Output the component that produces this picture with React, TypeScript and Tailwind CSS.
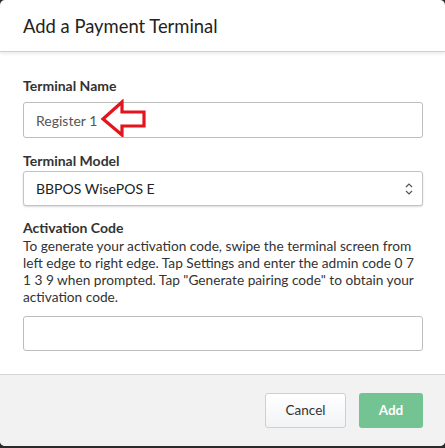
import React, { useState } from "react";

const RedArrow = () => (
  <svg width="46" height="38" viewBox="0 0 46 38" className="absolute left-[100px] top-[99px]">
    <path
      d="M3 20 L22 3 L22 13 L44 13 L44 27 L22 27 L22 36 Z"
      fill="none"
      stroke="#e3141d"
      strokeWidth="3.2"
      strokeLinejoin="miter"
    />
  </svg>
);

const App: React.FC = () => {
  const [name, setName] = useState("Register 1");
  const [model, setModel] = useState("BBPOS WisePOS E");
  const [code, setCode] = useState("");

  return (
    <div
      className="h-[448px] w-[445px] bg-[#2a2a2a] text-[#333]"
      style={{ fontFamily: "Lato, 'Open Sans', sans-serif" }}
    >
      <div className="relative flex h-[446px] flex-col overflow-hidden rounded-[5px] bg-white">
        <div className="flex h-[52px] items-center border-b border-[#d0d0d0] px-[23px] pt-[2px] shadow-[0_2px_3px_rgba(0,0,0,0.08)]">
          <h2 className="text-[18.4px] text-[#222]">Add a Payment Terminal</h2>
        </div>

        <div className="flex flex-1 flex-col px-[23px] pt-[25px]">
          <label className="text-[14px] font-bold leading-[18px] text-[#333]">Terminal Name</label>
          <input
            value={name}
            onChange={(e) => setName(e.target.value)}
            className="mt-[7px] h-[36px] w-[400px] rounded-[3px] border border-[#bdbdbd] px-[12px] text-[14px] text-[#555] outline-none"
          />

          <label className="mt-[14px] text-[14px] font-bold leading-[18px] text-[#333]">Terminal Model</label>
          <div className="relative mt-[1px] h-[35px] w-[400px]">
            <select
              value={model}
              onChange={(e) => setModel(e.target.value)}
              className="h-full w-full appearance-none rounded-[3px] border border-[#c4c4c4] bg-white px-[12px] text-[14px] text-[#222] shadow-[0_1px_2px_rgba(0,0,0,0.15)] outline-none"
            >
              <option>BBPOS WisePOS E</option>
              <option>Verifone P400</option>
            </select>
            <svg width="8" height="12" viewBox="0 0 8 12" className="pointer-events-none absolute right-[10px] top-[12px]">
              <path d="M1 4 L4 1 L7 4 M1 8 L4 11 L7 8" fill="none" stroke="#555" strokeWidth="1.2" />
            </svg>
          </div>

          <label className="mt-[13px] text-[14px] font-bold leading-[18px] text-[#333]">Activation Code</label>
          <p className="text-[13.7px] leading-[17px] text-[#333]">
            To generate your activation code, swipe the terminal screen from left edge to right edge. Tap Settings and
            enter the admin code 0 7 1 3 9 when prompted. Tap "Generate pairing code" to obtain your activation code.
          </p>
          <input
            value={code}
            onChange={(e) => setCode(e.target.value)}
            className="mt-[11px] h-[35px] w-[400px] rounded-[3px] border border-[#bdbdbd] px-[12px] text-[13px] outline-none"
          />
        </div>

        <div className="flex h-[72px] items-center justify-end gap-[13px] border-t border-[#d4d4d4] bg-[#f2f2f2] px-[22px]">
          <button className="h-[35px] w-[81px] rounded-[3px] border border-[#cfcfcf] bg-gradient-to-b from-white to-[#f1f3f5] text-[13.5px] text-[#333]">
            Cancel
          </button>
          <button className="h-[35px] w-[64px] rounded-[3px] bg-[#73c393] text-[13.5px] font-bold text-white">Add</button>
        </div>

        <RedArrow />
      </div>
    </div>
  );
};

export default App;
